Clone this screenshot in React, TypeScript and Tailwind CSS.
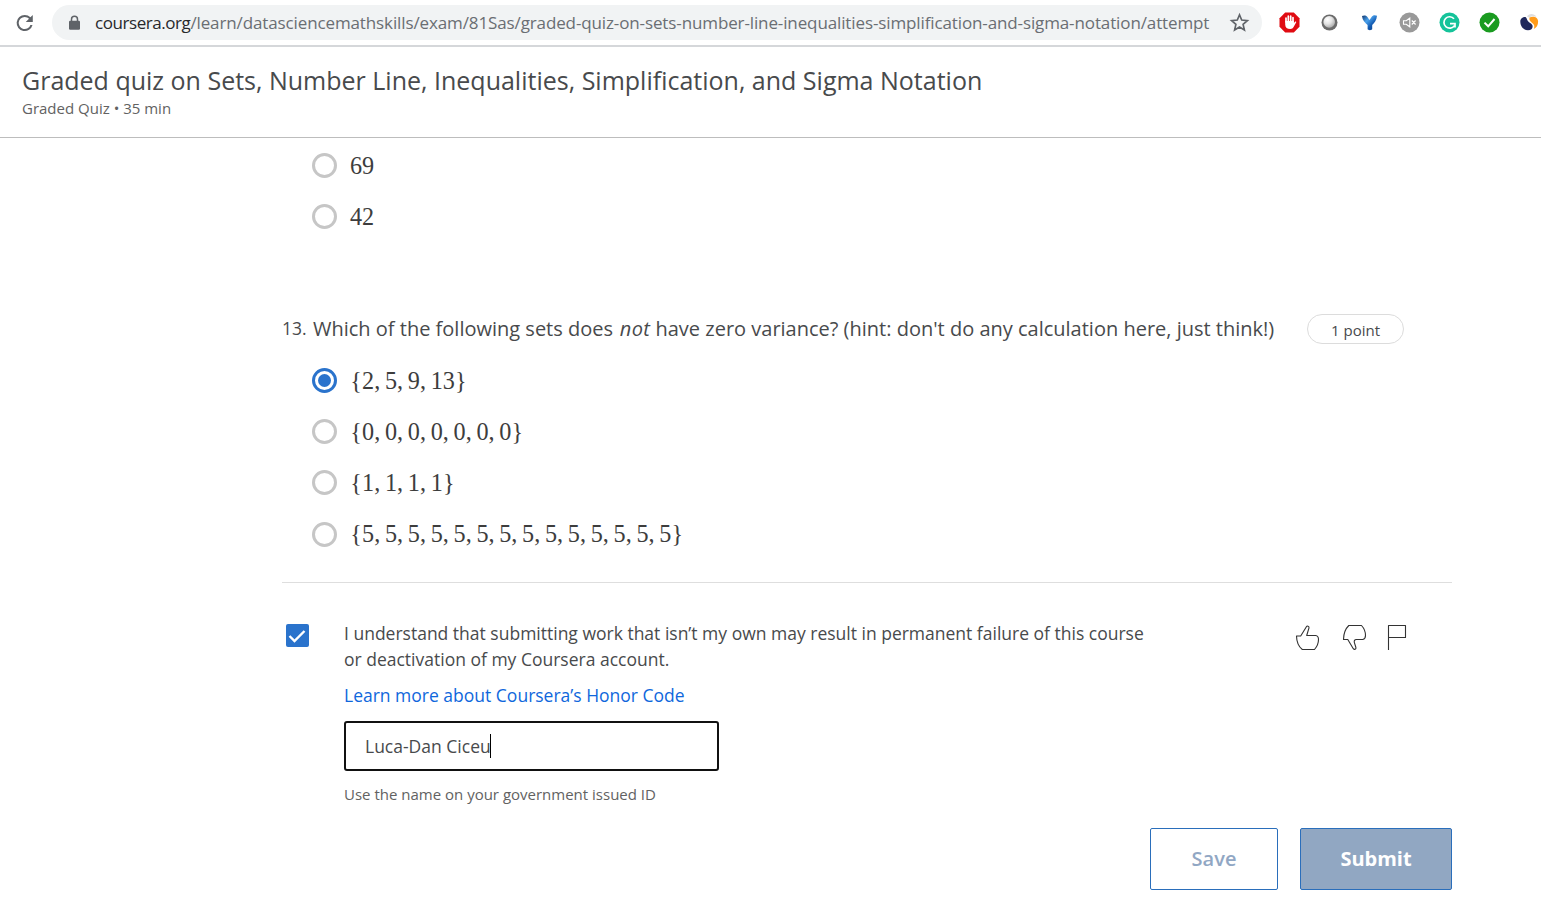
import React from "react";

const glyphWidth = (c: string) =>
  c === "," ? "w-[0.445em] text-left" : "w-[0.5em] text-center";

function MathText({ value }: { value: string }) {
  return (
    <span className="ml-[13.5px] flex font-['Liberation_Serif',serif] text-[24.2px] leading-[30px] text-[#3d3d3d]">
      {value.split("").map((c, i) => (
        <span key={i} className={glyphWidth(c)}>
          {c}
        </span>
      ))}
    </span>
  );
}

function Option({ value, checked = false }: { value: string; checked?: boolean }) {
  return (
    <label className="flex h-[51.2px] items-center pl-[311.5px]">
      <span
        className={
          checked
            ? "flex size-[25px] items-center justify-center rounded-full border-[3px] border-[#2a73cc]"
            : "flex size-[25px] items-center justify-center rounded-full border-[3px] border-[#c6c6c6]"
        }
      >
        {checked && <span className="size-[13px] rounded-full bg-[#2a73cc]" />}
      </span>
      <MathText value={value} />
    </label>
  );
}

function Extensions() {
  return (
    <div className="ml-[17px] flex shrink-0 items-center gap-[19px]">
      <svg width="21" height="21" viewBox="0 0 21 21">
        <path d="M6.2 .5h8.6l5.7 5.7v8.6l-5.7 5.7H6.2L.5 14.800V6.200z" fill="#e00b12" />
        <path d="M7 10V6M9.300 9V4.200M11.700 9V4.200M14 10V5.600" stroke="#fff" strokeWidth="1.700" strokeLinecap="round" />
        <path d="M6.200 9h8.700v2l1.100-1.200c.7-.6 1.500 0 1.100.8l-2.500 4.400c-.7 1.300-1.600 1.900-3.300 1.900-3.200 0-5.100-1.400-5.100-4.500z" fill="#fff" />
      </svg>
      <svg width="21" height="21" viewBox="0 0 21 21">
        <defs>
          <radialGradient id="orb" cx=".35" cy=".3" r=".75">
            <stop offset="0" stopColor="#fff" />
            <stop offset=".5" stopColor="#e4e4e4" />
            <stop offset="1" stopColor="#aaa" />
          </radialGradient>
        </defs>
        <circle cx="10.500" cy="10.500" r="8" fill="#6b6b6b" />
        <circle cx="10.200" cy="9.900" r="5.800" fill="url(#orb)" />
      </svg>
      <svg width="21" height="21" viewBox="0 0 21 21">
        <defs>
          <linearGradient id="vee" x1="0" x2="1" y1="0" y2="1">
            <stop offset="0" stopColor="#0c2f66" />
            <stop offset=".35" stopColor="#4ba3ee" />
            <stop offset=".65" stopColor="#1259b0" />
            <stop offset="1" stopColor="#0b3f86" />
          </linearGradient>
        </defs>
        <path d="M3 4c1.700-1 4.200-.8 5.200.8l2.300 3.200 2.600-3.700c1-1.300 3.300-1.500 4.900-.5-.4 4.200-2.500 7.200-4.800 9.200V17c0 1.500-4.600 1.500-4.600 0v-4C6 11 3.400 8.200 3 4z" fill="url(#vee)" />
      </svg>
      <svg width="21" height="21" viewBox="0 0 21 21" fill="none">
        <circle cx="10.500" cy="10.500" r="10" fill="#999" />
        <path d="M4.500 8.800h2.700l3.600-2.600v8.600l-3.600-2.600H4.500zM12.800 8.500l3.800 4M16.600 8.500l-3.800 4" stroke="#fff" strokeWidth="1.100" />
      </svg>
      <svg width="21" height="21" viewBox="0 0 21 21" fill="none">
        <circle cx="10.500" cy="10.500" r="10" fill="#15c39a" />
        <path d="M15 6.800A5.700 5.700 0 1 0 15.400 13.600M11 11.600h5v4" stroke="#fff" strokeWidth="1.700" />
      </svg>
      <svg width="21" height="21" viewBox="0 0 21 21" fill="none">
        <circle cx="10.500" cy="10.500" r="10" fill="#1a9b20" />
        <path d="M5.500 10.600l3.700 3.700 6.300-7.300" stroke="#fff" strokeWidth="2" />
      </svg>
      <svg width="21" height="21" viewBox="0 0 21 21">
        <path d="M8 4.500c1.500-3 7-3.500 9.500.3-2.500-.8-5.300-.8-7 1z" fill="#dedede" />
        <path d="M6.500 5C3.300 5 1.300 7 1.300 9.500c0 5.200 3.500 8.700 7.700 8.700 3.200 0 4.800-1.800 4.600-4.200-.3-2.600-3.400-2.800-4.900-5.200C7.900 7.500 7.800 6 6.500 5z" fill="#20285c" />
        <path d="M10.600 5.600c3.200-1.600 8.300-.8 8.500 4 .1 3.500-1.700 6.400-4.300 7.500 1.200-3.300.4-4.700-1.900-6.400-1.900-1.400-3.200-2.900-2.300-5.100z" fill="#ff9b1a" />
      </svg>
    </div>
  );
}

function BrowserBar() {
  return (
    <div className="flex h-[47px] items-center overflow-hidden border-b-2 border-[#d5d7da] bg-white pl-[14px]">
      <svg className="shrink-0" width="22" height="22" viewBox="0 0 24 24" fill="#5f6368">
        <path d="M17.650 6.350A7.950 7.950 0 0 0 12 4a8 8 0 1 0 7.730 10h-2.080A6 6 0 1 1 12 6c1.660 0 3.140.69 4.220 1.780L13 11h7V4z" transform="translate(-1.500 -1.200) scale(1.100)" />
      </svg>
      <div className="ml-[16px] flex h-[35px] w-[1210px] shrink-0 items-center rounded-full bg-[#f1f3f4] pl-[16px]">
        <svg width="13" height="16" viewBox="0 0 13 16">
          <path d="M3.500 7V4.300a3 3 0 0 1 6 0V7" fill="none" stroke="#5f6368" strokeWidth="1.500" />
          <rect x="1" y="5.800" width="11" height="9" rx="1.200" fill="#5f6368" />
        </svg>
        <span className="ml-[14px] w-[1136px] whitespace-nowrap text-[17px] leading-[24px] tracking-[-0.119px] text-[#6a6e73]">
          <span className="tracking-[-0.440px] text-[#27282c]">coursera.org</span>
          /learn/datasciencemathskills/exam/81Sas/graded-quiz-on-sets-number-line-inequalities-simplification-and-sigma-notation/attempt
        </span>
        <svg className="shrink-0 -ml-[2px]" width="21" height="21" viewBox="0 0 24 24" fill="none" stroke="#5f6368" strokeWidth="1.900">
          <path d="M12 3.200l2.500 6 6.500.6-4.900 4.300 1.500 6.400L12 17.100l-5.600 3.400 1.500-6.400L3 9.800l6.500-.6z" />
        </svg>
      </div>
      <Extensions />
    </div>
  );
}

export default function App() {
  return (
    <div className="h-[920px] w-[1541px] overflow-hidden bg-white font-['Open_Sans',sans-serif] text-[#484a4c]">
      <BrowserBar />
      <header className="h-[91px] border-b border-[#bdbdbd] pl-[22px] pt-[16px]">
        <h1 className="whitespace-nowrap text-[25px] leading-[34px]">
          <span>Graded quiz on Sets, Number Line, Inequalities, Simplification, and Sigma Notation</span>
        </h1>
        <p className="mt-px text-[15px] leading-[20px] text-[#626262]">
          <span>Graded Quiz • 35 min</span>
        </p>
      </header>

      <main className="pt-[2px]">
        <Option value="69" />
        <Option value="42" />

        <div className="mt-[72px] flex h-[30px] items-center whitespace-nowrap pl-[282px]">
          <span className="w-[31px] pb-[3px] text-[17.5px] leading-[26px]">13.</span>
          <p className="w-[994px] text-[20px] leading-[28px]">
            <span>
              Which of the following sets does <em className="ml-[1.5px] tracking-[0.4px]">not</em> have zero variance? (hint: don't do any calculation here, just think!)
            </span>
          </p>
          <span className="flex h-[30px] w-[97px] items-center justify-center rounded-full border border-[#dcdcdc] pt-[2px] text-[15px]">
            1 point
          </span>
        </div>

        <div className="mt-[10.600px]">
          <Option value="{2,5,9,13}" checked />
          <Option value="{0,0,0,0,0,0,0}" />
          <Option value="{1,1,1,1}" />
          <Option value="{5,5,5,5,5,5,5,5,5,5,5,5,5,5}" />
        </div>

        <hr className="ml-[282px] mt-[22.400px] w-[1170px] border-[#dedede]" />

        <section className="flex pl-[285.500px] pt-[37px]">
          <span className="mt-[4px] flex size-[23px] shrink-0 items-center justify-center rounded-[2px] bg-[#2a73cc]">
            <svg width="18" height="18" viewBox="0 0 18 18" fill="none" stroke="#fff" strokeWidth="2.400">
              <path d="M1.500 9l5 5L16.500 4" />
            </svg>
          </span>
          <div className="ml-[35.500px] w-[950px] whitespace-nowrap text-[17.5px]">
            <p className="leading-[26px]">
              <span>I understand that submitting work that isn’t my own may result in permanent failure of this course</span>
              <br />
              <span>or deactivation of my Coursera account.</span>
            </p>
            <a className="mt-[11px] block leading-[24px] text-[#0f67dc]">
              <span>Learn more about Coursera’s Honor Code</span>
            </a>
            <div className="mt-[14px] flex h-[50px] w-[375px] items-center rounded-[3px] border-2 border-[#111] pl-[19px]">
              <span>Luca-Dan Ciceu</span>
              <span className="-ml-px h-[24px] w-px bg-black" />
            </div>
            <p className="mt-[13px] text-[15px] leading-[20px] text-[#626262]">
              <span>Use the name on your government issued ID</span>
            </p>
          </div>
          <svg className="mt-[3px]" width="114" height="30" viewBox="0 0 114 30" fill="none" stroke="#333" strokeWidth="1.100" strokeLinejoin="round">
            <path d="M2.500 13h4.200l5.700-9.300c.7-1.100 2.800-.7 2.600 1.100l-2.300 7.700h9c1.800.3 2.800 2 2.800 4 0 3.500-1.200 6.800-4 10H8.300C4.500 23.500 2.600 18.500 2.500 13z" />
            <path d="M49.500 16.500h4.300l5.500 9.200c1 1.200 3 .6 2.600-1.200l-1.600-5.200c-.3-1.500.3-2.800 2-2.800h6.500c2-.6 2.700-2.200 2.700-4 0-3.800-1.400-7.200-4-10H54.800c-3.300 3.200-5.200 8-5.300 14z" />
            <path d="M94.500 27V2.500h17v12h-17" />
          </svg>
        </section>

        <div className="mt-[24px] flex gap-[22px] pl-[1150px] text-[20px] font-semibold">
          <button className="h-[62px] w-[128px] rounded-[2px] border border-[#2a6ebb] text-[#91a7c4]">Save</button>
          <button className="h-[62px] w-[152px] rounded-[2px] border border-[#2a6ebb] bg-[#91a7c2] font-bold text-white">Submit</button>
        </div>
      </main>
    </div>
  );
}
